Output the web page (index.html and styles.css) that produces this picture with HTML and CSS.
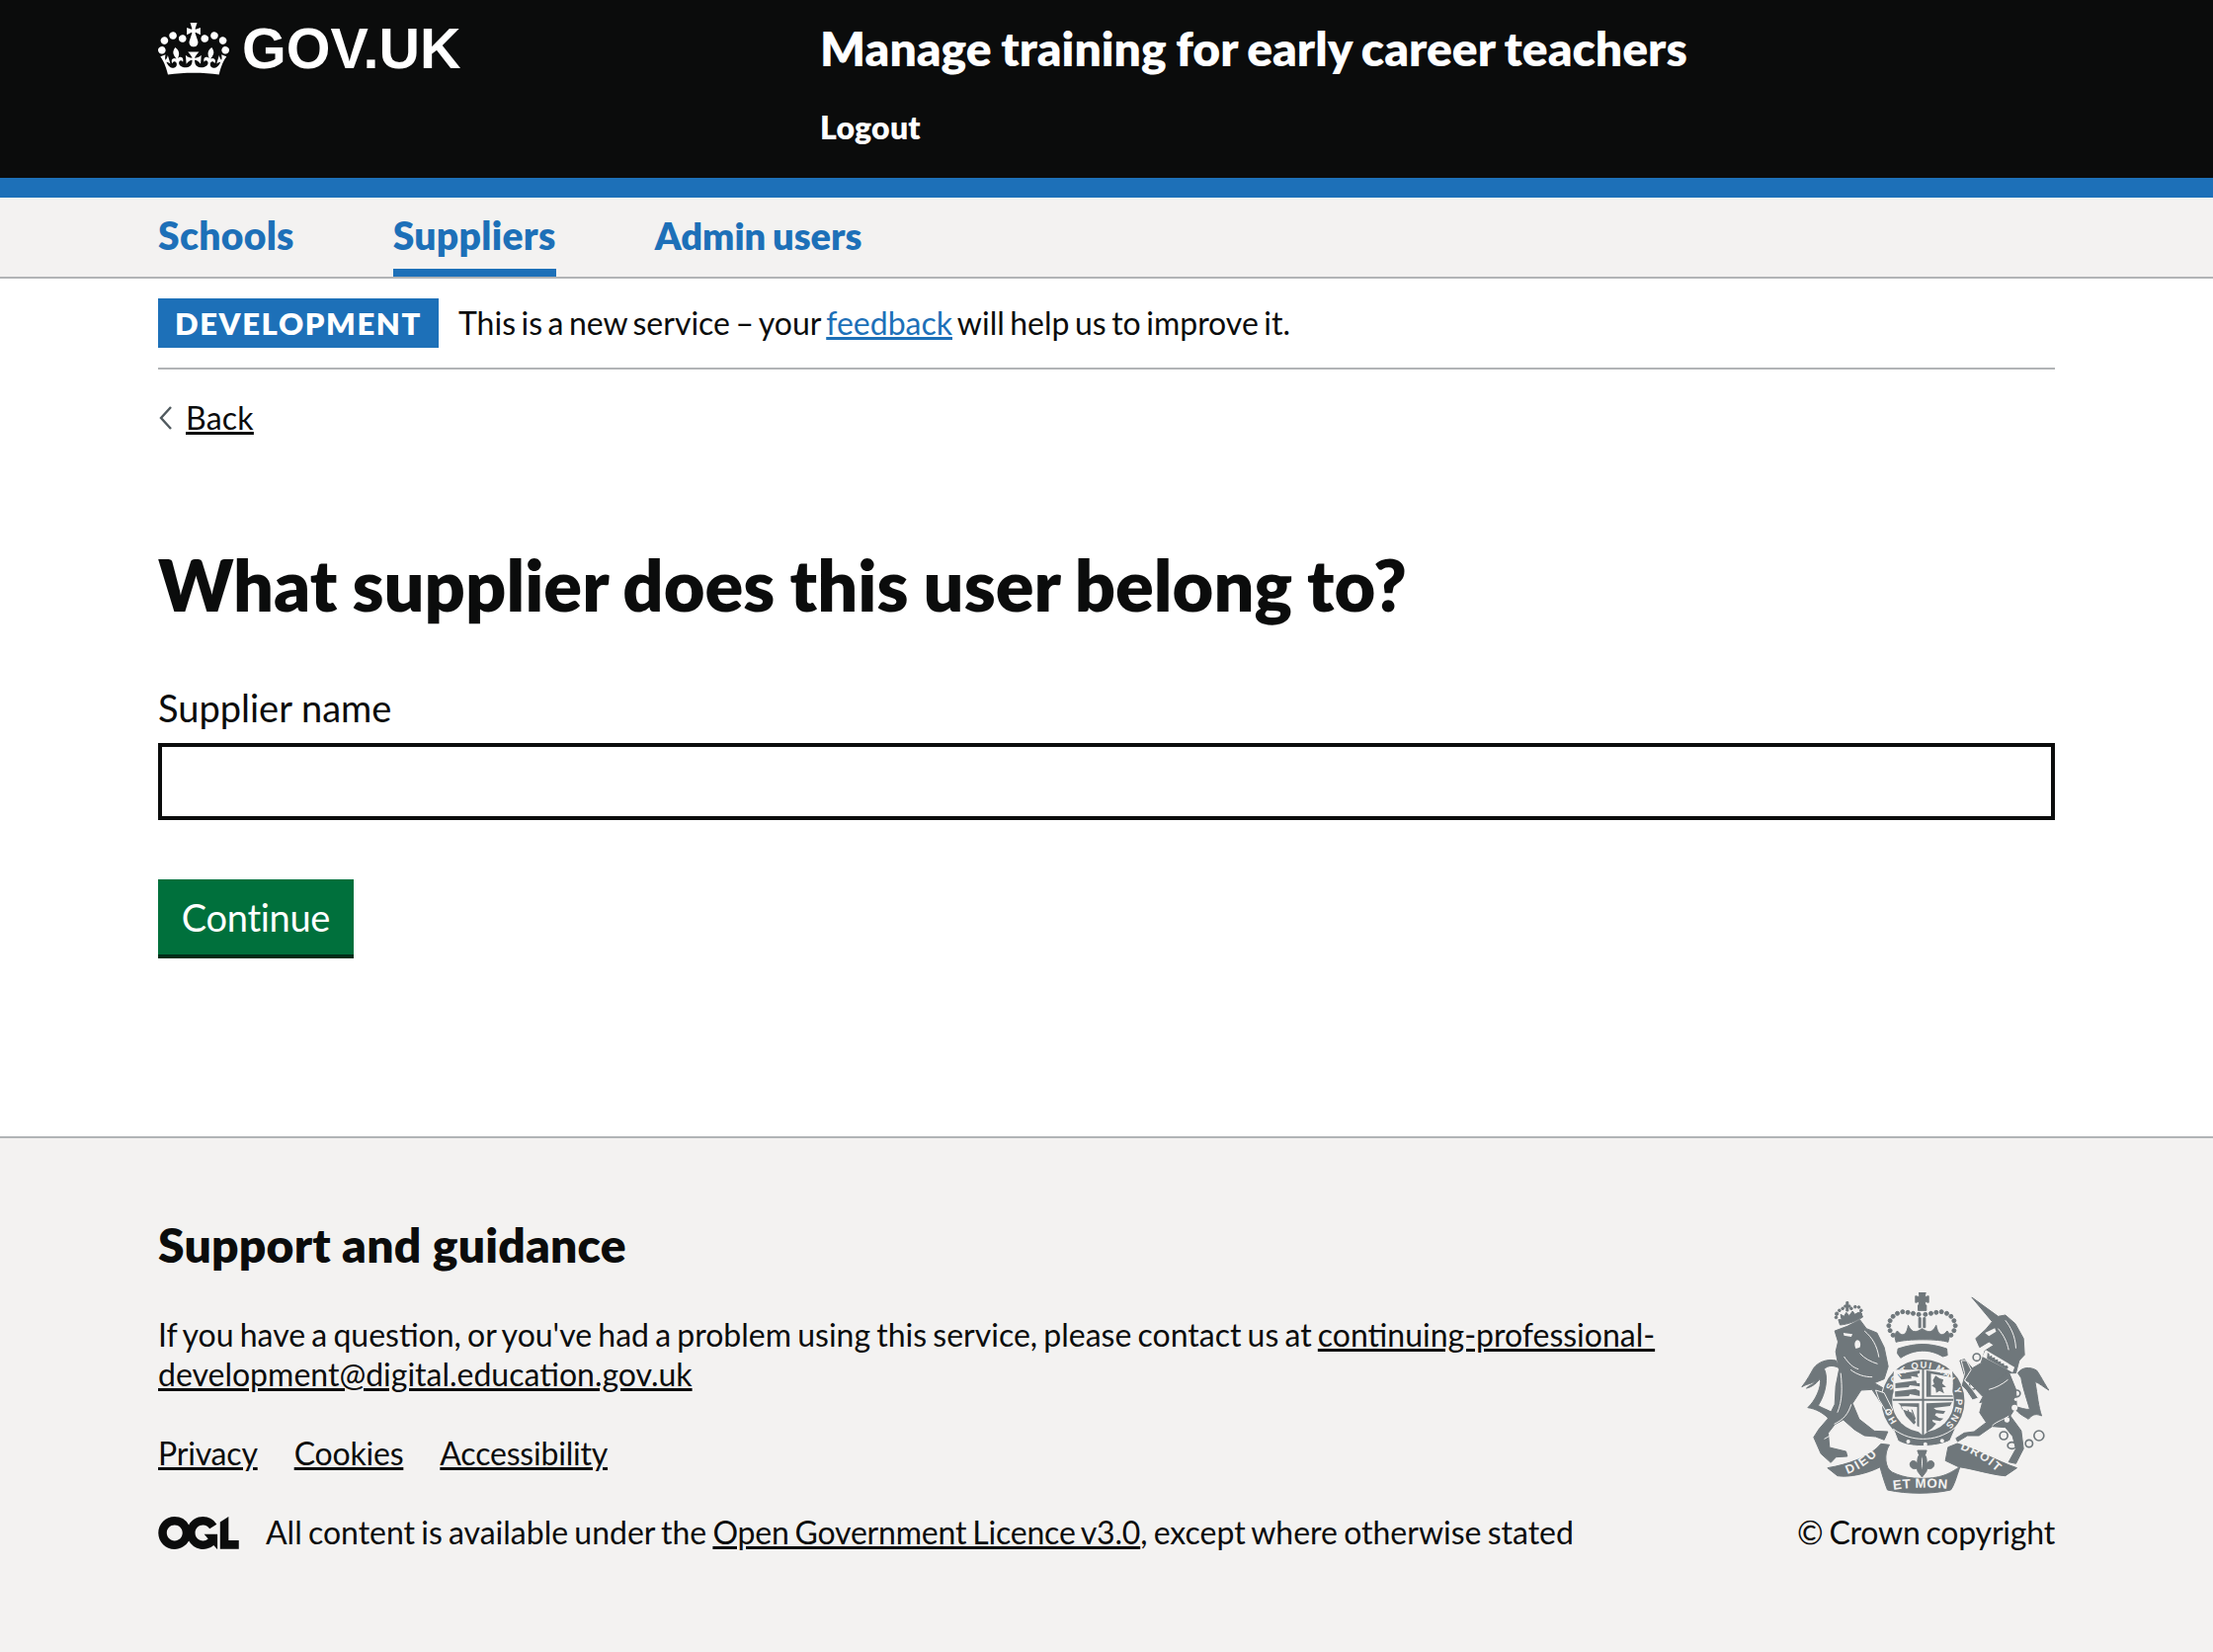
FILE: index.html
```html
<!DOCTYPE html>
<html lang="en">
<head>
<meta charset="utf-8">
<title>What supplier does this user belong to?</title>
<link rel="stylesheet" href="styles.css">
</head>
<body>
<header class="site-header">
  <div class="width header-row">
    <a class="logo" href="#">
      <svg class="crown" viewBox="0 0 132 97" aria-hidden="true"><path fill="currentColor" fill-rule="evenodd" d="M25 30.2c3.5 1.5 7.7-.2 9.1-3.7 1.5-3.6-.2-7.8-3.9-9.2-3.6-1.4-7.6.3-9.1 3.9-1.4 3.5.3 7.5 3.9 9zM9 39.5c3.6 1.5 7.8-.2 9.2-3.7 1.5-3.6-.2-7.8-3.9-9.1-3.6-1.5-7.6.2-9.1 3.8-1.4 3.5.3 7.5 3.8 9zM4.4 57.2c3.5 1.5 7.7-.2 9.1-3.8 1.5-3.6-.2-7.7-3.9-9.1-3.5-1.5-7.6.3-9.1 3.8-1.4 3.5.3 7.6 3.9 9.1zm38.3-21.4c3.5 1.5 7.7-.2 9.1-3.8 1.5-3.6-.2-7.7-3.9-9.1-3.6-1.5-7.6.3-9.1 3.8-1.3 3.6.4 7.7 3.9 9.1zm64.4-5.6c-3.6 1.5-7.8-.2-9.1-3.7-1.5-3.6.2-7.8 3.8-9.2 3.6-1.4 7.7.3 9.2 3.9 1.3 3.5-.4 7.5-3.9 9zm15.9 9.3c-3.6 1.5-7.7-.2-9.1-3.7-1.5-3.6.2-7.8 3.7-9.1 3.6-1.5 7.7.2 9.2 3.8 1.5 3.5-.3 7.5-3.8 9zm4.7 17.7c-3.6 1.5-7.8-.2-9.2-3.8-1.5-3.6.2-7.7 3.9-9.1 3.6-1.5 7.7.3 9.2 3.8 1.3 3.5-.4 7.6-3.9 9.1zM89.3 35.8c-3.6 1.5-7.8-.2-9.2-3.8-1.4-3.6.2-7.7 3.9-9.1 3.6-1.5 7.7.3 9.2 3.8 1.4 3.6-.3 7.7-3.9 9.1zM69.7 17.7l8.9 4.7V9.3l-8.9 2.8c-.2-.3-.5-.6-.9-.9L72.4 0H59.6l3.5 11.2c-.3.3-.6.5-.9.9l-8.8-2.8v13.1l8.8-4.7c.3.3.6.7.9.9l-5 15.4v.1c-.2.8-.4 1.6-.4 2.4 0 4.1 3.1 7.5 7 8.1h.2c.3 0 .7.1 1 .1.4 0 .7 0 1-.1h.2c4-.6 7.1-4.1 7.1-8.1 0-.8-.1-1.7-.4-2.4V34l-5.1-15.4c.4-.2.7-.6 1-.9zM66 92.8c16.9 0 32.8 1.1 47.1 3.2 4-16.9 8.9-26.7 14-33.5l-9.6-3.4c1 4.9 1.1 7.2 0 10.2-1.5-1.4-3-4.3-4.2-8.7L108.6 76c2.8-2 5-3.2 7.5-3.3-4.4 9.4-10 11.9-13.6 11.2-4.3-.8-6.3-4.6-5.6-7.9 1-4.7 5.7-5.9 8-.5 4.3-8.7-3-11.4-7.6-8.8 7.1-7.2 7.9-13.5 2.1-21.1-8 6.1-8.1 12.3-4.5 20.8-4.7-5.4-12.1-2.5-9.5 6.2 3.4-5.2 7.9-2 7.2 3.1-.6 4.3-6.4 7.8-13.5 7.2-10.3-.9-10.9-8-11.2-13.8 2.5-.5 7.1 1.8 11 7.3L80.2 60c-4.1 4.4-8 5.3-12.3 5.4 1.4-4.4 8-11.6 8-11.6H55.5s6.4 7.2 7.9 11.6c-4.2-.1-8-1-12.3-5.4l1.4 16.4c3.9-5.5 8.5-7.7 10.9-7.3-.3 5.8-.9 12.8-11.1 13.8-7.2.6-12.9-2.9-13.5-7.2-.7-5 3.8-8.3 7.1-3.1 2.7-8.7-4.6-11.6-9.4-6.2 3.7-8.5 3.6-14.7-4.6-20.8-5.8 7.6-5 13.9 2.2 21.1-4.7-2.6-11.9.1-7.7 8.8 2.3-5.5 7.1-4.2 8.1.5.7 3.3-1.3 7.1-5.7 7.9-3.5.7-9-1.8-13.5-11.2 2.5.1 4.7 1.3 7.5 3.3l-4.7-15.4c-1.2 4.4-2.7 7.2-4.3 8.7-1.1-3-.9-5.3 0-10.2l-9.5 3.4c5 6.9 9.9 16.7 14 33.5 14.8-2.1 30.8-3.2 47.7-3.2z"/></svg>
      <span class="logo-text">GOV.UK</span>
    </a>
    <div class="service">
      <a class="service-name" href="#">Manage training for early career teachers</a>
      <a class="logout" href="#">Logout</a>
    </div>
  </div>
</header>
<nav class="primary-nav">
  <div class="width nav-row">
    <a class="nav-link" href="#">Schools</a>
    <a class="nav-link current" href="#">Suppliers</a>
    <a class="nav-link tight" href="#">Admin users</a>
  </div>
</nav>
<div class="width">
  <div class="phase">
    <strong class="tag">DEVELOPMENT</strong>
    <span class="phase-text">This is a new service – your <a class="blue-link" href="#">feedback</a> will help us to improve it.</span>
  </div>
  <a class="back" href="#"><svg class="chev" viewBox="0 0 14 26" aria-hidden="true"><path d="M13 2 3 13l10 11" fill="none" stroke="currentColor" stroke-width="2.4"/></svg><span>Back</span></a>
  <main class="main">
    <h1 class="title">What supplier does this user belong to?</h1>
    <label class="label" for="supplier">Supplier name</label>
    <input class="input" id="supplier" type="text">
    <button class="button" type="button">Continue</button>
  </main>
</div>
<footer class="footer">
  <div class="width footer-row">
    <div class="footer-main">
      <h2 class="footer-title">Support and guidance</h2>
      <p class="footer-text">If you have a question, or you've had a problem using this service, please contact us at <a href="#">continuing-professional-development@digital.education.gov.uk</a></p>
      <ul class="meta">
        <li><a href="#">Privacy</a></li>
        <li><a href="#">Cookies</a></li>
        <li><a href="#">Accessibility</a></li>
      </ul>
      <div class="licence">
        <svg class="ogl" viewBox="0 0 483.2 195.7" aria-hidden="true"><path fill="currentColor" d="M421.5 142.8V.1l-50.7 32.3v161.1h112.4v-50.7zm-122.3-9.6A47.12 47.12 0 0 1 221 97.8c0-26 21.1-47.1 47.1-47.1 16.7 0 31.4 8.7 39.7 21.8l42.7-27.2A97.63 97.63 0 0 0 268.1 0c-36.5 0-68.3 20.1-85.1 49.7A98 98 0 0 0 97.8 0C43.9 0 0 43.9 0 97.8s43.9 97.8 97.8 97.8c36.5 0 68.3-20.1 85.1-49.7a97.76 97.76 0 0 0 149.6 25.4l19.4 22.2h3v-87.8h-80l24.3 27.5zM97.8 145c-26 0-47.1-21.1-47.1-47.1s21.1-47.1 47.1-47.1 47.2 21 47.2 47S123.8 145 97.8 145"/></svg>
        <span>All content is available under the <a class="licence-link" href="#">Open Government Licence v3.0</a>, except where otherwise stated</span>
      </div>
    </div>
    <div class="copyright">
      <svg class="crest" viewBox="70 55 755 612" aria-hidden="true">
        <defs>
          <path id="g-main" d="M345 354A100 100 0 1 1 506 460"/>
          <path id="g-left" d="M361 447A100 100 0 0 1 341 399"/>
          <path id="r-l" d="M210 606Q268 588 312 534"/>
          <path id="r-m" d="M348 655Q435 642 526 653"/>
          <path id="r-r" d="M552 532Q612 550 674 608"/>
        </defs>
        <g class="crest-solid">
          <path d="M176 262C150 256 122 266 108 285 98 302 88 322 72 342 92 330 100 336 112 322 106 338 98 334 86 346 104 342 118 330 128 316 132 345 112 385 90 405 112 408 140 420 162 448L172 425C150 410 128 405 122 398 146 360 152 312 140 288 150 276 168 276 184 284Z"/>
          <path d="M172 172 210 158 248 138 268 165 300 178 322 222 334 280 322 318 292 330 330 352 346 410 332 422 300 372 285 350 252 352 226 392 246 440 292 476 333 478 322 503 296 493 262 490 232 472 198 442 172 456 152 482 156 526 206 538 210 553 176 555 160 572 130 545 108 495 124 470 150 440 172 395 175 340 185 290 175 235 182 205Z"/>
          <path d="M188 154 183 138C205 138 230 128 250 114L257 130C235 144 210 152 188 154Z"/>
          <path d="M201 94h6V84h6v10h6v6h-6v12h-6v-12h-6z"/>
          <circle cx="178" cy="120" r="5"/><circle cx="186" cy="110" r="4"/><circle cx="196" cy="104" r="4"/><circle cx="222" cy="104" r="4"/><circle cx="234" cy="99" r="4"/><circle cx="245" cy="100" r="4"/><circle cx="252" cy="110" r="4"/><circle cx="250" cy="121" r="4"/><circle cx="176" cy="131" r="4"/>
          <path d="M192 135 190 122 200 128 207 116 216 126 226 112 233 122 244 116 242 126 222 133 204 138Z"/>
          <path d="M428 55h20l-3 14 12-3v20l-12-3 3 14h-22l3-14-12 3V66l12 3z"/>
          <path d="M425 94h25v16h-25z"/>
          <path d="M427 132h6v30h-6zM441 132h6v30h-6z"/>
          <path d="M358 206C354 190 352 182 362 172 375 190 390 188 395 155 408 182 420 176 437 165 455 176 467 182 480 155 486 188 500 190 513 172 523 182 520 190 516 206 490 196 390 196 358 206Z"/>
          <path d="M364 226C420 208 458 208 512 226L514 246 500 250C460 226 415 226 372 254L362 240Z"/>
          <circle cx="427" cy="122" r="6"/><circle cx="410" cy="119" r="6"/><circle cx="394" cy="116" r="6"/><circle cx="378" cy="114" r="6"/><circle cx="362" cy="119" r="6"/><circle cx="349" cy="128" r="6"/><circle cx="340" cy="141" r="6"/><circle cx="336" cy="156" r="6"/><circle cx="340" cy="171" r="6"/><circle cx="349" cy="185" r="6"/>
          <circle cx="447" cy="122" r="6"/><circle cx="464" cy="119" r="6"/><circle cx="480" cy="116" r="6"/><circle cx="496" cy="114" r="6"/><circle cx="512" cy="119" r="6"/><circle cx="525" cy="128" r="6"/><circle cx="534" cy="141" r="6"/><circle cx="538" cy="156" r="6"/><circle cx="534" cy="171" r="6"/><circle cx="525" cy="185" r="6"/>
          <path d="M588 70 668 128 690 124 720 150 745 195 748 245 732 262 722 300 700 300 664 330 645 380 612 390 622 372 582 330 570 322 552 262 566 258 590 285 616 270 628 232 655 215 640 205 612 222 600 195 630 168 650 144Z"/>
          <path d="M640 340 700 296 722 350 724 400 705 430 738 475 745 530 722 575 700 570 722 530 712 492 690 465 650 462 610 490 575 490 545 508 540 498 565 482 595 478 632 450 612 420 620 390Z"/>
          <path d="M728 300C740 282 765 280 785 292 795 305 810 335 822 352 805 342 795 332 780 326 788 370 790 400 800 430 778 420 770 430 760 440 745 430 725 422 715 400 735 405 752 412 764 410 752 370 742 340 738 315Z"/>
          <path d="M150 588C210 578 280 555 312 515L338 518C320 545 325 590 345 600L308 586C272 605 215 618 180 612Z"/>
          <path d="M308 580C345 600 370 620 435 620 505 620 525 600 552 585 540 620 535 640 524 655 465 668 395 668 332 655 322 630 315 605 308 580Z"/>
          <path d="M508 566 516 525 544 514C590 525 670 570 725 588L690 612C650 610 590 590 548 585Z"/>
          <path d="M423 535h28l-5 14c6 8 5 20 5 28 3-12 18-14 22-4 4 12-10 22-20 16-2 5-2 8-3 10l-13 17-13-17c-1-2-1-5-3-10-10 6-24-4-20-16 4-10 19-8 22 4 0-8-1-20 5-28zM437 552c-4 7-4 30 0 44 4-14 4-37 0-44z" fill-rule="evenodd"/>
        </g>
        <g class="crest-ring">
          <circle cx="685" cy="490" r="12"/><ellipse cx="710" cy="520" rx="13" ry="10"/><circle cx="762" cy="514" r="11"/><circle cx="792" cy="490" r="15"/>
          <circle cx="603" cy="252" r="11"/><circle cx="592" cy="338" r="11"/><circle cx="725" cy="362" r="10"/>
        </g>
        <g class="crest-light">
          <path d="M198 178l28 4-4 8-22-4zM240 200c10 0 12 14 8 22l-12 4c-6-12-4-22 4-26z"/>
          <path d="M628 178l30-14 4 10-22 14z"/>
          <path d="M630 230l88 52-6 16-92-48z"/>
          <circle cx="718" cy="405" r="9"/><circle cx="695" cy="442" r="8"/><circle cx="722" cy="380" r="5"/>
        </g>
        <path class="crest-fill" d="M636 238l5 4 1 7 7-3 1 8 8-2 1 8 8-2 1 8 8-2 1 8 8-2 2 8 8-1 4 6-5 6-60-33z"/>
        <g class="crest-line">
          <path d="M200 250C215 272 228 284 244 288M262 172C285 192 300 215 306 252M248 240C262 256 282 266 302 272M220 290C240 305 262 312 286 312M190 300C195 345 195 385 180 420M170 455C200 440 212 425 222 395M140 500C160 490 180 475 196 450"/>
          <path d="M690 140C705 160 720 185 722 225M668 165C685 185 695 205 700 230M640 350C660 345 680 335 698 320M650 460C665 445 690 440 700 430"/>
        </g>
        <circle class="crest-bg" cx="440" cy="385" r="129"/>
        <circle class="crest-fill" cx="440" cy="385" r="126"/>
        <circle class="crest-bg" cx="440" cy="385" r="94"/>
        <path class="crest-bg" d="M352 290h176c8 70 4 130-88 200-92-70-96-130-88-200Z"/>
        <path class="crest-fill" d="M437 285h6v207h-6zM348 378h184v6H348z"/>
        <g class="crest-fill">
          <path d="M362 303 430 292v8l-8 3 4 10-22-4 1 8-31 2zM356 331l62-8 4 8h8v10l-30-4-4 6-40 3zM355 356l62-8 13 6v16l-30-6-3 6-42 2z"/>
          <path d="M450 292 522 303l2 9-60-10v66h66l1 4h-81zM470 322l8-14 12 8 12 4-4 12 12 10-12 2 6 18-14-8-10 6-2-14-12-8 8-4z"/>
          <path d="M450 392l78-3-6 11-50 6 8 6 28 4-6 8-22-2-4 6 12 8 14 2-10 8-24-4 2 6 10 6-13 14-17 12z"/>
          <path d="M364 392h64v72l-6-3v-58l-50-3 4 10 30 10 12 30-6 6-24-26-10-22-8-12zM392 410l4 2 14 36-4 2zM404 410l4 2 10 28-4 2z"/>
        </g>
        <path class="crest-edge" d="M350 470C380 492 410 500 440 500 470 500 505 492 540 464L522 505C490 524 400 530 364 506Z"/>
        <circle class="crest-bg" cx="395" cy="508" r="6"/><circle class="crest-bg" cx="447" cy="516" r="6"/><circle class="crest-bg" cx="498" cy="506" r="6"/>
        <path class="crest-edge" d="M296 352 322 360 348 412 332 424 306 380Z"/>
        <path class="crest-edge" d="M556 262 572 262 586 290 566 322 590 350 608 376 590 382 570 352 556 338 566 300Z"/>
        <g class="crest-text">
          <text class="t-garter"><textPath href="#g-main">SOIT QUI MAL Y PENSE</textPath></text>
          <text class="t-garter"><textPath href="#g-left">HO</textPath></text>
          <text class="t-dieu"><textPath href="#r-l">DIEU</textPath></text>
          <text class="t-et"><textPath href="#r-m" startOffset="2">ET MON</textPath></text>
          <text class="t-droit"><textPath href="#r-r">DROIT</textPath></text>
        </g>
      </svg>
      <span class="copy-text">© Crown copyright</span>
    </div>
  </div>
</footer>
</body>
</html>
```
FILE: styles.css
```css
* { box-sizing: border-box; }
html, body { margin: 0; padding: 0; }
body {
  font-family: Lato, "Noto Sans", sans-serif;
  color: #0b0c0c;
  background: #fff;
  min-height: 1672px;
  display: flex;
  flex-direction: column;
}
a { color: inherit; }
.width { width: 1920px; margin: 0 160px; }

.site-header { background: #0b0c0c; color: #fff; height: 200px; border-bottom: 20px solid #1d70b8; }
.header-row { display: flex; }
.logo { display: flex; align-items: flex-start; gap: 13px; width: 670px; padding-top: 23px; text-decoration: none; color: #fff; }
.crown { width: 72px; height: 53px; flex: none; }
.logo-text { font-family: "Liberation Sans", sans-serif; font-weight: 700; font-size: 57.5px; line-height: 53px; }
.service { display: flex; flex-direction: column; align-items: flex-start; padding-top: 19px; }
.service-name { font-size: 48px; line-height: 60px; font-weight: 800; text-decoration: none; color: #fff; word-spacing: -1.5px; }
.logout { font-size: 32px; line-height: 40px; font-weight: 800; margin-top: 30px; text-decoration: none; color: #fff; letter-spacing: 0.2px; }

.primary-nav { background: #f3f2f1; height: 82px; border-bottom: 2px solid #b1b4b6; }
.nav-row { display: flex; gap: 100px; height: 80px; }
.nav-link { font-size: 39px; line-height: 50px; padding-top: 13px; font-weight: 800; letter-spacing: 0.3px; color: #1d70b8; text-decoration: none; }
.nav-link.tight { font-size: 38px; letter-spacing: 0; word-spacing: -2px; }
.nav-link.current { border-bottom: 8px solid #1d70b8; }

.phase { display: flex; align-items: center; gap: 20px; padding-top: 20px; padding-bottom: 20px; height: 92px; border-bottom: 2px solid #b1b4b6; }
.tag { background: #1d70b8; color: #fff; height: 50px; width: 284px; display: flex; align-items: center; justify-content: center; font-size: 31px; letter-spacing: 1.6px; font-weight: 800; }
.phase-text { font-size: 32px; line-height: 50px; word-spacing: -2.7px; }
.blue-link { color: #1d70b8; }

.back { display: inline-flex; align-items: center; gap: 14px; margin-top: 29px; font-size: 32px; line-height: 40px; }
.back span { text-decoration: underline; letter-spacing: 0.2px; }
.chev { width: 14px; height: 26px; color: #505a5f; }

.main { display: flex; flex-direction: column; align-items: flex-start; padding-top: 98px; height: 707px; }
.title { font-size: 72px; line-height: 100px; font-weight: 800; margin: 0; word-spacing: -1.5px; }
.label { font-size: 38px; line-height: 50px; margin-top: 50px; }
.input { width: 100%; height: 78px; border: 4px solid #0b0c0c; margin-top: 11px; padding: 10px; background: #fff; border-radius: 0; }
.button { margin-top: 60px; height: 80px; width: 198px; background: #00703c; color: #fff; border: 0; border-bottom: 4px solid #002d18; font: inherit; font-size: 38px; letter-spacing: -0.3px; padding: 0; }

.footer { flex: 1; background: #f3f2f1; border-top: 2px solid #b1b4b6; }
.footer-row { display: flex; justify-content: space-between; align-items: flex-end; padding-top: 78px; }
.footer-main { width: 1530px; }
.footer-title { font-size: 48px; line-height: 60px; font-weight: 800; margin: 0; letter-spacing: 0.2px; }
.footer-text { font-size: 32px; line-height: 40px; margin: 41px 0 0; word-spacing: -2px; }
.meta { list-style: none; display: flex; gap: 37px; margin: 40px 0 0; padding: 0; font-size: 32px; line-height: 40px; letter-spacing: -0.2px; }
.licence { display: flex; align-items: center; gap: 27px; margin-top: 40px; font-size: 32px; line-height: 40px; word-spacing: -2px; }
.licence-link { letter-spacing: -0.2px; }
.ogl { width: 82px; height: 33px; flex: none; }
.copyright { display: flex; flex-direction: column; align-items: flex-end; font-size: 32px; line-height: 40px; word-spacing: -2px; letter-spacing: -0.2px; }
.crest { width: 252px; height: 204px; margin-right: 5px; margin-bottom: 19px; }

.crest-solid { fill: #6f777b; stroke: #6f777b; stroke-width: 3px; stroke-linejoin: round; }
.crest-fill { fill: #6f777b; }
.crest-bg, .crest-light { fill: #f3f2f1; }
.crest-ring { fill: none; stroke: #6f777b; stroke-width: 5px; }
.crest-line { fill: none; stroke: #f3f2f1; stroke-width: 3px; }
.crest-edge { fill: #6f777b; stroke: #f3f2f1; stroke-width: 3px; }
.crest-text { fill: #f3f2f1; font-family: "Liberation Sans", sans-serif; font-weight: 700; letter-spacing: 0; }
.t-garter { font-size: 28px; letter-spacing: 4px; }
.t-dieu { font-size: 38px; letter-spacing: 6px; }
.t-et { font-size: 40px; letter-spacing: 2px; }
.t-droit { font-size: 36px; letter-spacing: 5px; }
```
